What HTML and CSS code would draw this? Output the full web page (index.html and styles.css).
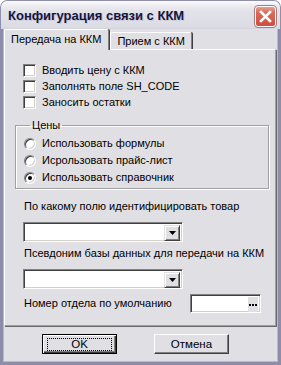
FILE: index.html
```html
<!DOCTYPE html>
<html>
<head>
<meta charset="utf-8">
<link rel="stylesheet" href="styles.css">
</head>
<body>
<div class="window">
  <div class="titlebar">
    <span class="title">Конфигурация связи с ККМ</span>
    <span class="close"><svg width="13" height="13" viewBox="0 0 13 13"><path d="M2 2 L11 11 M11 2 L2 11" stroke="#fff" stroke-width="2.6" stroke-linecap="square"/></svg></span>
  </div>
  <div class="client">
    <div class="tabs">
      <div class="tab active">Передача на ККМ</div>
      <div class="tab">Прием с ККМ</div>
    </div>
    <div class="panel">
      <div class="checks">
        <div class="row"><span class="cb"></span><span>Вводить цену с ККМ</span></div>
        <div class="row"><span class="cb"></span><span>Заполнять поле SH_CODE</span></div>
        <div class="row"><span class="cb"></span><span>Заносить остатки</span></div>
      </div>
      <fieldset class="group">
        <legend>Цены</legend>
        <div class="row"><span class="rb"></span><span>Использовать формулы</span></div>
        <div class="row"><span class="rb"></span><span>Исрользовать прайс-лист</span></div>
        <div class="row"><span class="rb on"></span><span>Использовать справочник</span></div>
      </fieldset>
      <div class="label l1">По какому полю идентифицировать товар</div>
      <div class="combo"><span class="drop"><svg width="7" height="4" viewBox="0 0 7 4"><path d="M0 0 H7 L3.5 4 Z" fill="#000"/></svg></span></div>
      <div class="label l2">Псевдоним базы данных для передачи на ККМ</div>
      <div class="combo"><span class="drop"><svg width="7" height="4" viewBox="0 0 7 4"><path d="M0 0 H7 L3.5 4 Z" fill="#000"/></svg></span></div>
      <div class="dept">
        <span class="label">Номер отдела по умолчанию</span>
        <div class="edit"><span class="dots"><svg width="8" height="2" viewBox="0 0 8 2"><path d="M0 0h2v2H0zM3 0h2v2H3zM6 0h2v2H6z" fill="#000"/></svg></span></div>
      </div>
    </div>
    <div class="buttons">
      <div class="btn default"><span class="focus">OK</span></div>
      <div class="btn">Отмена</div>
    </div>
  </div>
</div>
</body>
</html>
```
FILE: styles.css
```css
* { box-sizing: border-box; }
html, body { margin: 0; padding: 0; background: #fff; }
body {
  font-family: "Liberation Sans", Arial, sans-serif;
  font-size: 11px;
  color: #000;
}
.window {
  width: 281px;
  height: 365px;
  display: flex;
  flex-direction: column;
  background: #e0dfe3;
  border-radius: 7px 7px 0 0;
  overflow: hidden;
}
.titlebar {
  height: 29px;
  flex: none;
  display: flex;
  align-items: center;
  justify-content: space-between;
  padding: 0 4px 0 7px;
  background: linear-gradient(#fdfdfe 0, #eeeef3 4px, #e2e2ea 10px, #dcdce5 26px, #d0d0dc 29px);
  border: 1px solid #8f8fab;
  border-bottom: none;
  border-radius: 7px 7px 0 0;
}
.title {
  font-weight: bold;
  font-size: 13px;
  color: #15153e;
  text-shadow: 1px 1px 0 #c8c8d6;
  margin-top: 1px;
}
.close {
  width: 21px;
  height: 21px;
  border-radius: 3px;
  border: 1px solid #fff;
  outline: 1px solid #a87a78;
  background: linear-gradient(#e8a090 0, #db6a5a 30%, #cf4c40 100%);
  display: flex;
  align-items: center;
  justify-content: center;
  margin-top: 2px;
}
.client {
  flex: 1;
  display: flex;
  flex-direction: column;
  border-left: 3px solid #8d8caa;
  border-right: 3px solid #8d8caa;
  border-bottom: 3px solid #8d8caa;
  box-shadow: inset 1px 0 0 #b9b9cc, inset -1px 0 0 #b9b9cc, inset 0 -1px 0 #b9b9cc;
  padding: 0 1px 0 1px;
}
.tabs {
  display: flex;
  align-items: flex-end;
  height: 20px;
  position: relative;
  z-index: 2;
}
.tab {
  height: 17px;
  padding: 0 6px 0 6px;
  border-left: 1px solid #fff;
  border-top: 1px solid #fff;
  border-right: 1px solid #808080;
  box-shadow: 1px 0 0 #404040;
  border-radius: 2px 2px 0 0;
  display: flex;
  align-items: center;
  line-height: 13px;
  font-size: 11px;
  background: #e0dfe3;
}
.tab.active {
  height: 21px;
  margin-bottom: -1px;
  padding: 0 7px 2px 6px;
  margin-right: 1px;
}
.panel {
  height: 277px;
  border-left: 1px solid #fff;
  border-top: 1px solid #fff;
  border-right: 1px solid #a0a0a0;
  border-bottom: 1px solid #a0a0a0;
  box-shadow: 1px 1px 0 #696969;
  margin-right: 1px;
  padding-top: 14px;
  display: flex;
  flex-direction: column;
}
.row {
  display: flex;
  align-items: center;
  height: 13px;
  gap: 6px;
  line-height: 13px;
}
.checks {
  display: flex;
  flex-direction: column;
  gap: 3px;
  margin-left: 18px;
}
.cb {
  width: 13px;
  height: 13px;
  flex: none;
  background: #fff;
  border: 1px solid;
  border-color: #808080 #fff #fff #808080;
  box-shadow: inset 1px 1px 0 #404040, inset -1px -1px 0 #d4d0c8;
}
.group {
  margin: 10px 6px 0 10px;
  padding: 5px 0 4px 8px;
  border: 1px solid #a0a0a0;
  box-shadow: 1px 1px 0 #fff, inset 1px 1px 0 #fff;
  display: flex;
  flex-direction: column;
  gap: 4px;
  min-width: 0;
}
.group legend {
  padding: 0 2px;
  margin-left: 6px;
  line-height: 13px;
}
.rb {
  width: 12px;
  height: 12px;
  flex: none;
  border-radius: 50%;
  background: #fff;
  border: 1px solid;
  border-color: #808080 #fff #fff #808080;
  box-shadow: inset 1px 1px 0 #404040, inset -1px -1px 0 #d4d0c8;
  display: flex;
  align-items: center;
  justify-content: center;
}
.rb.on::after {
  content: "";
  width: 4px;
  height: 4px;
  border-radius: 50%;
  background: #000;
}
.label {
  line-height: 13px;
  margin-left: 19px;
}
.l1 { margin-top: 11px; }
.l2 { margin-top: 5px; }
.combo {
  width: 160px;
  height: 20px;
  margin: 9px 0 0 18px;
  background: #fff;
  border: 1px solid;
  border-color: #808080 #fff #fff #808080;
  box-shadow: inset 1px 1px 0 #404040, inset -1px -1px 0 #d4d0c8;
  display: flex;
  justify-content: flex-end;
  padding: 2px;
}
.drop {
  width: 16px;
  height: 16px;
  background: #e0dfe3;
  border: 1px solid;
  border-color: #e0dfe3 #404040 #404040 #e0dfe3;
  box-shadow: inset 1px 1px 0 #fff, inset -1px -1px 0 #808080;
  display: flex;
  align-items: center;
  justify-content: center;
}
.dept {
  display: flex;
  align-items: center;
  margin-top: 5px;
}
.dept .label { margin-left: 19px; }
.edit {
  width: 71px;
  height: 19px;
  margin-left: auto;
  margin-right: 14px;
  background: #fff;
  border: 1px solid;
  border-color: #808080 #fff #fff #808080;
  box-shadow: inset 1px 1px 0 #404040, inset -1px -1px 0 #d4d0c8;
  display: flex;
  justify-content: flex-end;
  padding: 2px;
}
.dots {
  width: 10px;
  height: 15px;
  background: #e0dfe3;
  display: flex;
  align-items: center;
  justify-content: center;
}
.buttons {
  display: flex;
  gap: 37px;
  margin: 8px 0 0 38px;
}
.btn {
  width: 75px;
  height: 20px;
  display: flex;
  align-items: center;
  justify-content: center;
  background: #e0dfe3;
  border: 1px solid;
  border-color: #fff #404040 #404040 #fff;
  box-shadow: inset -1px -1px 0 #808080, inset 1px 1px 0 #e0dfe3;
  font-size: 11.5px;
}
.btn.default {
  border: 1px solid #000;
  box-shadow: inset 1px 1px 0 #fff, inset -1px -1px 0 #404040, inset -2px -2px 0 #808080;
}
.focus {
  width: 65px;
  height: 13px;
  border: 1px dotted #000;
  display: flex;
  align-items: center;
  justify-content: center;
  line-height: 11px;
}
```
